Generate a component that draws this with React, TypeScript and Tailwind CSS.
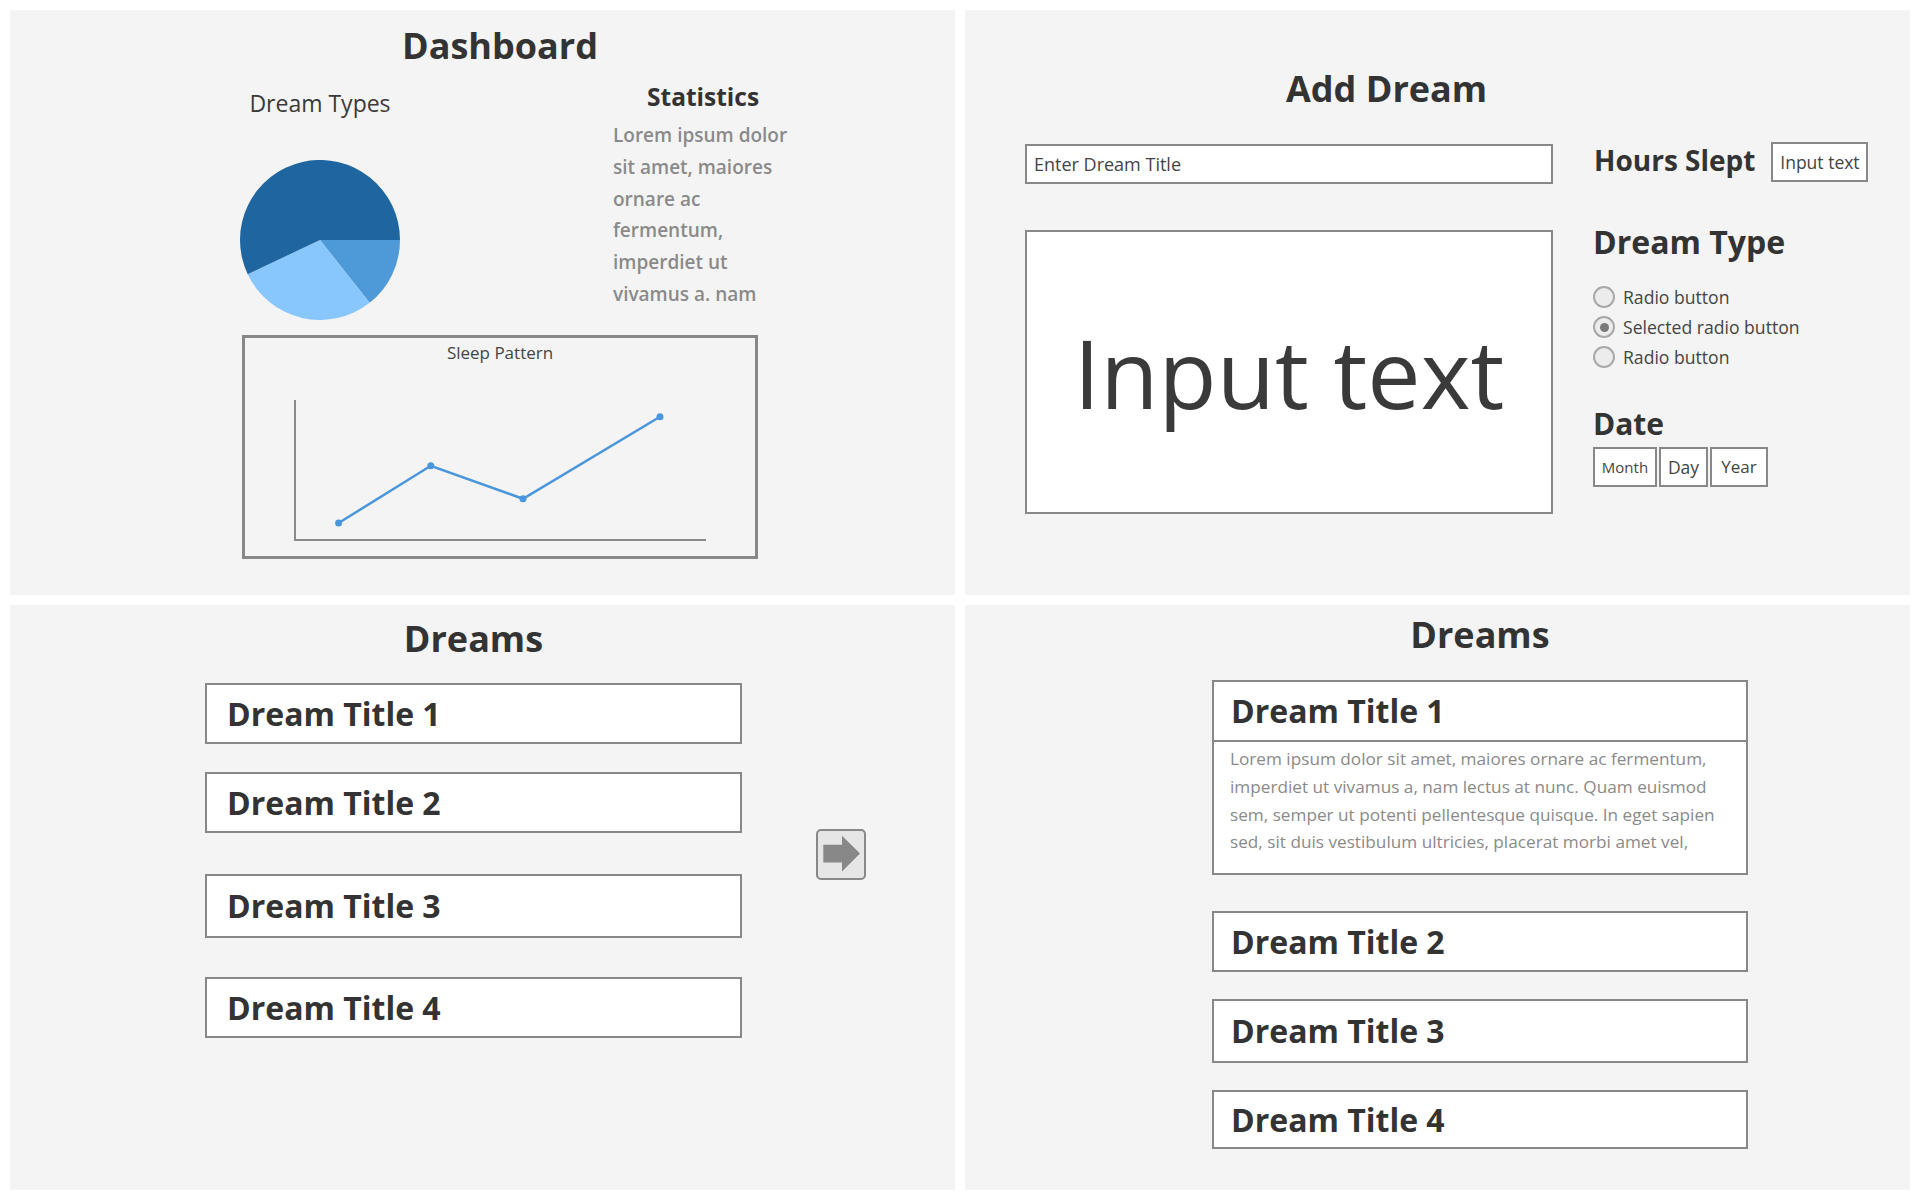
import React from "react";

const boxBorder = "border-2 border-[#888888] bg-white";

function Pie() {
  return (
    <svg width="160" height="160" viewBox="0 0 160 160" className="mt-[43px] block">
      <path d="M80,80 L160,80 A80,80 0 0 1 129.6,142.8 Z" fill="#4e9ad8" />
      <path d="M80,80 L129.6,142.8 A80,80 0 0 1 7.7,114.2 Z" fill="#88c7fd" />
      <path d="M80,80 L7.7,114.2 A80,80 0 1 1 160,80 Z" fill="#1f66a0" />
    </svg>
  );
}

function LineChart() {
  const pts: [number, number][] = [
    [93.6, 159],
    [185.8, 101.8],
    [278, 134.8],
    [415, 52.8],
  ];
  return (
    <svg width="510" height="191" viewBox="0 0 510 191" className="block">
      <line x1="50" y1="36" x2="50" y2="176" stroke="#8a8a8a" strokeWidth="2" />
      <line x1="49" y1="176" x2="461" y2="176" stroke="#8a8a8a" strokeWidth="2" />
      <polyline
        points={pts.map((p) => p.join(",")).join(" ")}
        fill="none"
        stroke="#4a96dc"
        strokeWidth="2.5"
      />
      {pts.map((p, i) => (
        <circle key={i} cx={p[0]} cy={p[1]} r="3.5" fill="#4a96dc" />
      ))}
    </svg>
  );
}

function Dashboard() {
  return (
    <section className="bg-[#f4f4f4] pl-[232px] pt-[16px]">
      <div className="w-[516px] flex flex-col">
        <h1 className="text-center text-[36px] leading-[40px] font-bold text-[#333333]">Dashboard</h1>
        <div className="flex">
          <div className="w-[160px] -ml-[2px] flex flex-col items-center pt-[23px]">
            <div className="text-[23px] leading-[28px] whitespace-nowrap text-[#3a3a3a]">Dream Types</div>
            <Pie />
          </div>
          <div className="ml-[213px] w-[190px] pt-[16px]">
            <div className="pl-[34px] text-[24.5px] leading-[30px] font-bold text-[#333333] whitespace-nowrap">Statistics</div>
            <div className="mt-[8px] text-[19px] leading-[31.8px] text-[#8a8a8a] font-semibold whitespace-nowrap">
              <div>Lorem ipsum dolor</div>
              <div>sit amet, maiores</div>
              <div>ornare ac</div>
              <div>fermentum,</div>
              <div>imperdiet ut</div>
              <div>vivamus a. nam</div>
            </div>
          </div>
        </div>
        <div className="mt-[15px] h-[224px] border-[3px] border-[#888888] flex flex-col">
          <div className="pt-[4px] text-center text-[17px] leading-[22px] text-[#444444]">Sleep Pattern</div>
          <LineChart />
        </div>
      </div>
    </section>
  );
}

function Radio({ label, selected }: { label: string; selected?: boolean }) {
  return (
    <div className="h-[30px] flex items-center">
      <div className="w-[22px] h-[22px] rounded-full border-2 border-[#a8a8a8] bg-[#ececec] flex items-center justify-center">
        {selected && <div className="w-[9px] h-[9px] rounded-full bg-[#7a7a7a]" />}
      </div>
      <span className="ml-[8px] text-[17.6px] leading-[22px] text-[#444444] whitespace-nowrap">{label}</span>
    </div>
  );
}

function AddDream() {
  return (
    <section className="bg-[#f4f4f4] pl-[60px] pt-[59px]">
      <h1 className="pl-[261px] text-[36px] leading-[40px] font-bold text-[#333333] whitespace-nowrap">Add Dream</h1>
      <div className="mt-[33px] flex items-start h-[42px]">
        <div className={`mt-[2px] w-[528px] h-[40px] ${boxBorder} flex items-center pl-[7px] text-[18px] text-[#444444]`}>
          Enter Dream Title
        </div>
        <div className="ml-[41px] text-[28px] leading-[36px] font-bold text-[#333333] whitespace-nowrap">Hours Slept</div>
        <div className={`ml-[16px] w-[97px] h-[40px] ${boxBorder} flex items-center justify-center text-[17.5px] text-[#444444] whitespace-nowrap`}>
          Input text
        </div>
      </div>
      <div className="mt-[38px] flex items-start">
        <div className={`mt-[8px] w-[528px] h-[284px] ${boxBorder} flex items-center justify-center text-[95px] leading-none text-[#3a3a3a] whitespace-nowrap`}>
          Input text
        </div>
        <div className="ml-[40px] mt-[2px] flex flex-col">
          <div className="text-[32px] leading-[36px] font-bold text-[#333333] whitespace-nowrap">Dream Type</div>
          <div className="mt-[22px] flex flex-col">
            <Radio label="Radio button" />
            <Radio label="Selected radio button" selected />
            <Radio label="Radio button" />
          </div>
          <div className="mt-[34px] text-[30px] leading-[36px] font-bold text-[#333333]">Date</div>
          <div className="mt-[5px] flex gap-[2px] text-[#444444]">
            <div className={`w-[64px] h-[40px] ${boxBorder} flex items-center justify-center text-[15px]`}>Month</div>
            <div className={`w-[49px] h-[40px] ${boxBorder} flex items-center justify-center text-[17.5px]`}>Day</div>
            <div className={`w-[58px] h-[40px] ${boxBorder} flex items-center justify-center text-[17px]`}>Year</div>
          </div>
        </div>
      </div>
    </section>
  );
}

function TitleBox({ title, mt, h, pl }: { title: string; mt: string; h: string; pl: string }) {
  return (
    <div className={`${mt} ${h} ${pl} ${boxBorder} flex items-center text-[32px] font-bold text-[#333333] whitespace-nowrap`}>
      {title}
    </div>
  );
}

function DreamsList() {
  return (
    <section className="bg-[#f4f4f4] pl-[195px] pt-[14px] flex items-start">
      <div className="w-[537px] flex flex-col">
        <h1 className="text-center text-[36px] leading-[40px] font-bold text-[#333333]">Dreams</h1>
        <TitleBox title="Dream Title 1" mt="mt-[24px]" h="h-[61px]" pl="pl-[20px]" />
        <TitleBox title="Dream Title 2" mt="mt-[28px]" h="h-[61px]" pl="pl-[20px]" />
        <TitleBox title="Dream Title 3" mt="mt-[41px]" h="h-[64px]" pl="pl-[20px]" />
        <TitleBox title="Dream Title 4" mt="mt-[39px]" h="h-[61px]" pl="pl-[20px]" />
      </div>
      <div className="ml-[74px] mt-[210px] w-[50px] h-[51px] rounded-[5px] border-2 border-[#888888] bg-[#e6e6e6]">
        <svg width="46" height="47" viewBox="0 0 46 47" className="block">
          <polygon points="5.3,13.7 24,13.7 24,4.7 42,22.5 24,40.4 24,31.4 5.3,31.4" fill="#888888" />
        </svg>
      </div>
    </section>
  );
}

function DreamsExpanded() {
  return (
    <section className="bg-[#f4f4f4] pl-[247px] pt-[10px]">
      <div className="w-[536px] flex flex-col">
        <h1 className="text-center text-[36px] leading-[40px] font-bold text-[#333333]">Dreams</h1>
        <div className={`mt-[25px] ${boxBorder} flex flex-col`}>
          <div className="h-[58px] flex items-center pl-[17px] text-[32px] font-bold text-[#333333] whitespace-nowrap">Dream Title 1</div>
          <div className="h-[133px] border-t-2 border-[#888888] pt-[3px] pl-[16px] text-[17.2px] leading-[27.8px] text-[#8a8a8a] whitespace-nowrap">
            <div>Lorem ipsum dolor sit amet, maiores ornare ac fermentum,</div>
            <div>imperdiet ut vivamus a, nam lectus at nunc. Quam euismod</div>
            <div>sem, semper ut potenti pellentesque quisque. In eget sapien</div>
            <div>sed, sit duis vestibulum ultricies, placerat morbi amet vel,</div>
          </div>
        </div>
        <TitleBox title="Dream Title 2" mt="mt-[36px]" h="h-[61px]" pl="pl-[17px]" />
        <TitleBox title="Dream Title 3" mt="mt-[27px]" h="h-[64px]" pl="pl-[17px]" />
        <TitleBox title="Dream Title 4" mt="mt-[27px]" h="h-[59px]" pl="pl-[17px]" />
      </div>
    </section>
  );
}

export default function App() {
  return (
    <div className="w-[1920px] h-[1200px] bg-white p-[10px] grid grid-cols-[945px_945px] grid-rows-[585px_585px] gap-[10px] font-['Open_Sans',sans-serif] text-[#333333]">
      <Dashboard />
      <AddDream />
      <DreamsList />
      <DreamsExpanded />
    </div>
  );
}
